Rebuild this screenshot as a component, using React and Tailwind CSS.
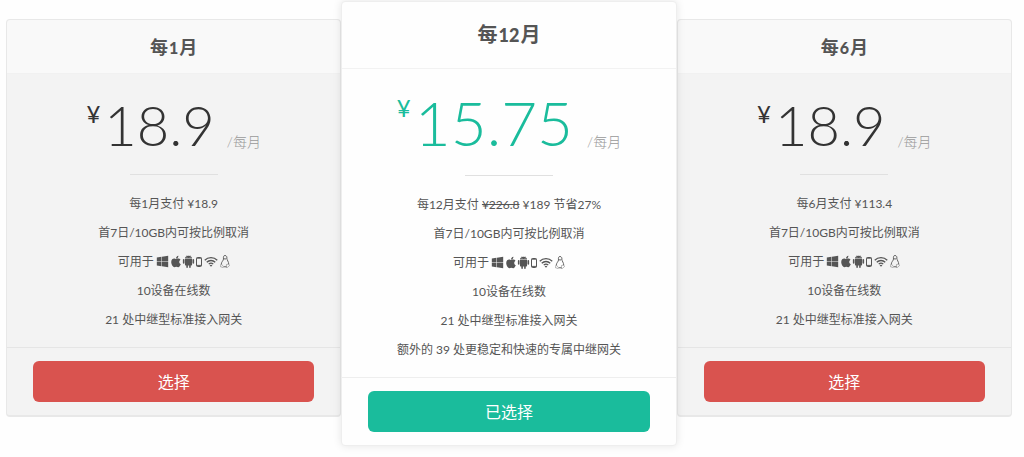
import React, { useState } from 'react';
import clsx from 'clsx';
import { FaApple, FaWindows } from 'react-icons/fa';
import { AiFillAndroid } from 'react-icons/ai';

const PLANS = [
  {
    id: 'monthly',
    months: 1,
    price: '18.9',
    billing: '每1月支付 ¥18.9',
    features: ['10设备在线数', '21 处中继型标准接入网关'],
  },
  {
    id: 'yearly',
    months: 12,
    price: '15.75',
    billing: (
      <>
        每12月支付 <s>¥226.8</s> ¥189 节省27%
      </>
    ),
    features: ['10设备在线数', '21 处中继型标准接入网关', '额外的 39 处更稳定和快速的专属中继网关'],
    featured: true,
  },
  {
    id: 'half-yearly',
    months: 6,
    price: '18.9',
    billing: '每6月支付 ¥113.4',
    features: ['10设备在线数', '21 处中继型标准接入网关'],
  },
];

function PhoneIcon() {
  return (
    <svg width="6" height="10" viewBox="0 0 6 10" fill="none" stroke="currentColor" aria-hidden="true">
      <rect x="0.5" y="0.5" width="5" height="9" rx="1" />
      <path d="M0.5 1.2h5M0.5 8.4h5" />
    </svg>
  );
}

function WifiIcon() {
  return (
    <svg width="14" height="11" viewBox="0 0 28 22" fill="none" stroke="currentColor" strokeWidth="2.6" aria-hidden="true">
      <path d="M1.500 8.500a17.500 17.500 0 0 1 25 0" />
      <path d="M5.500 12.500a12 12 0 0 1 17 0" />
      <path d="M9.500 16.300a6.500 6.500 0 0 1 9 0" />
      <path d="M14 21.500l-2.800-2.800a4 4 0 0 1 5.600 0z" fill="currentColor" stroke="none" />
    </svg>
  );
}

function PenguinIcon() {
  return (
    <svg width="10" height="13" viewBox="0 0 20 26" fill="none" stroke="currentColor" strokeWidth="1.8" aria-hidden="true">
      <path d="M7 8C6.500 3.500 7 1 10 1s4 2.500 3.800 6c0 3 3.700 6.500 3.700 11.500M7 8c0 3-4.500 6-4.500 10.500" />
      <path d="M7.500 6.500L10 8.500l3-2" />
      <path d="M2.500 18l5 5.500-1 1.500L1 23.500l.5-4zM17 18l2.200 3-4.700 4h-2l.5-6z" strokeWidth="1.2" opacity=".7" />
      <path d="M7.500 23.500h5.500" />
    </svg>
  );
}

function Platforms() {
  return (
    <span className="flex items-center gap-0.5 text-[#555555]">
      <FaWindows className="size-[13px]" />
      <FaApple className="h-[13px] w-[10px]" />
      <AiFillAndroid className="-mx-0.5 size-[15px]" />
      <PhoneIcon />
      <WifiIcon />
      <PenguinIcon />
    </span>
  );
}

function PlanCard({ plan, selected, onSelect }) {
  const { featured } = plan;

  return (
    <section
      className={clsx(
        'rounded border',
        featured
          ? 'z-10 border-[#eeeeee] bg-[#fefefe] shadow-[0_0_8px_rgba(0,0,0,0.1)]'
          : 'mt-[18px] border-[#e8e8e8] border-b-2 bg-[#f3f3f3]'
      )}
    >
      <h2
        className={clsx(
          'flex items-baseline justify-center border-b font-bold text-[#555555]',
          featured
            ? 'h-[67px] border-[#f2f2f2] pt-4 text-[20px] leading-8'
            : 'h-[54px] rounded-t border-[#f1f1f1] bg-[#f9f9f9] pt-[11px] text-[18px] leading-8'
        )}
      >
        <span>每</span>
        <span className={clsx('px-px font-black', featured ? 'text-[18px]' : 'text-[16px]')}>{plan.months}</span>
        <span>月</span>
      </h2>

      <div className={clsx('flex justify-center font-light', featured ? 'pt-[21px] text-[#1abc9c]' : 'pt-[19px] text-[#333333]')}>
        <span className={clsx('mr-1 text-[24px] font-normal', featured ? 'leading-9' : 'leading-[42px]')}>¥</span>
        <span className={clsx('leading-16', featured ? 'text-[62px]' : 'text-[56px]')}>{plan.price}</span>
        <span className={clsx('self-end text-[14px] text-[#999999]', featured ? 'ml-3.5 leading-6' : 'ml-3 leading-[30px]')}>
          /每月
        </span>
      </div>

      <hr className={clsx('mx-auto w-[88px] border-[#e0e0e0]', featured ? 'mt-[21px]' : 'mt-[17px]')} />

      <ul className="mt-[14px] pb-[13px] text-center text-[12px] leading-[29px] text-[#555555]">
        <li>{plan.billing}</li>
        <li>首7日/10GB内可按比例取消</li>
        <li className="flex items-center justify-center gap-0.5">
          可用于
          <Platforms />
        </li>
        {plan.features.map((feature) => (
          <li key={feature}>{feature}</li>
        ))}
      </ul>

      <div className={clsx('border-t px-[26px] py-[13px]', featured ? 'border-[#eeeeee]' : 'border-[#e5e5e5]')}>
        <button
          type="button"
          onClick={onSelect}
          aria-pressed={selected}
          className={clsx('h-[41px] w-full rounded-md text-[16px] text-white', selected ? 'bg-[#1abc9c]' : 'bg-[#d9534f]')}
        >
          {selected ? '已选择' : '选择'}
        </button>
      </div>
    </section>
  );
}

export default function App() {
  const [selectedId, setSelectedId] = useState('yearly');

  return (
    <main className="grid grid-cols-3 items-start bg-[#fefefe] pt-px pr-3 pb-3 pl-1.5 font-[Lato,'Noto_Sans_CJK_SC',sans-serif]">
      {PLANS.map((plan) => (
        <PlanCard key={plan.id} plan={plan} selected={plan.id === selectedId} onSelect={() => setSelectedId(plan.id)} />
      ))}
    </main>
  );
}
